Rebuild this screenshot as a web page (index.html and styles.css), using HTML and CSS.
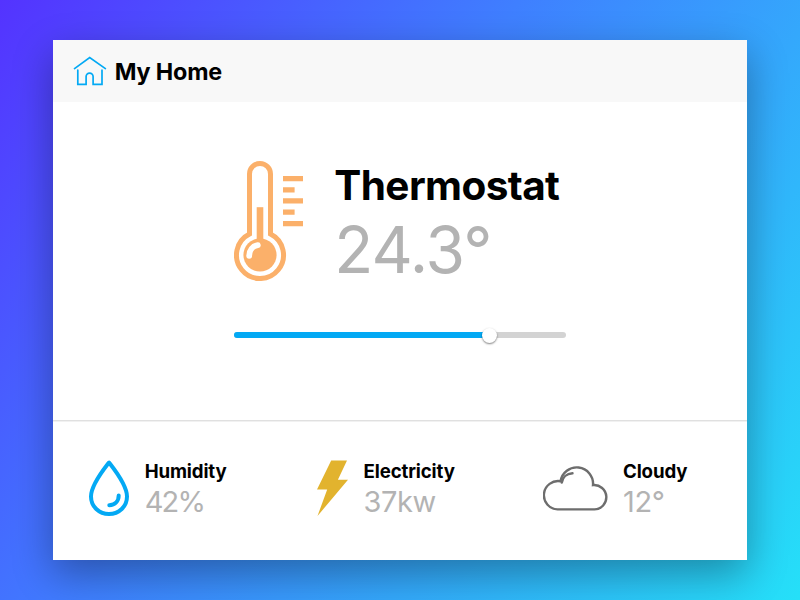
FILE: index.html
```html
<!DOCTYPE html>
<html lang="en">
<head>
<meta charset="utf-8">
<title>My Home</title>
<link rel="stylesheet" href="styles.css">
</head>
<body>
<main class="card">
  <header class="header">
    <svg class="house" width="34" height="30" viewBox="73 56 34 30" fill="none" stroke="#03a9f4" stroke-width="1.7" stroke-linecap="round">
      <path d="M74.5 68.6 89.7 57.6 105.4 68.6"/>
      <path d="M77.8 70.2V84.4H86.1V76.6a3.5 3.5 0 0 1 7 0V84.4H102V70.2"/>
    </svg>
    <h1 class="title">My Home</h1>
  </header>
  <section class="main">
    <div class="thermostat">
      <svg class="thermometer" width="70" height="120" viewBox="0 0 70 120" fill="#fbb06a">
        <path d="M15.5 73V13a10.5 10.5 0 0 1 21 0V73a23.5 23.5 0 1 1-21 0Z" fill="none" stroke="#fbb06a" stroke-width="5"/>
        <path d="M22.7 46.2h6.6V80h-6.6Z"/>
        <circle cx="26" cy="94" r="16.6"/>
        <path d="M15.2 94.8c0-5.5 3.4-9.8 8.6-10.6" fill="none" stroke="#fff" stroke-width="5.8" stroke-linecap="round"/>
        <path d="M49 15h20v5.3H49ZM49 26.2h11.6v5.2H49ZM49 37.2h20v5.3H49ZM49 48.5h11.6v5.2H49ZM49 60h20v5.2H49Z"/>
      </svg>
      <div class="reading">
        <h2 class="reading-name">Thermostat</h2>
        <div class="reading-value">24.3°</div>
      </div>
    </div>
    <div class="slider">
      <div class="slider-fill"></div>
      <div class="slider-thumb"></div>
    </div>
  </section>
  <footer class="footer">
    <div class="stat stat-humidity">
      <svg width="40" height="57" viewBox="89 460 40 57" fill="none" stroke="#03a9f4" stroke-width="4" stroke-linecap="round" stroke-linejoin="round">
        <path d="M109 462.5C104 469 91 485 91 496.5C91 506.5 99 514 109 514S127 506.5 127 496.5C127 485 114 469 109 462.5Z"/>
        <path d="M118.7 495.5C118.7 501 115 505 109.3 505.2"/>
      </svg>
      <div class="stat-text"><h3 class="stat-name">Humidity</h3><div class="stat-value">42%</div></div>
    </div>
    <div class="stat stat-electricity">
      <svg width="31" height="57" viewBox="317.5 460 31 57" fill="#e2b32e">
        <path d="M331.7 460.4H347.5L338.4 479.7H348.5L318 516 327.7 489.4H317.5Z"/>
      </svg>
      <div class="stat-text"><h3 class="stat-name">Electricity</h3><div class="stat-value">37kw</div></div>
    </div>
    <div class="stat stat-cloudy">
      <svg width="65" height="57" viewBox="543 460 65 57" fill="none" stroke="#6d6d6d" stroke-width="2.4" stroke-linecap="round">
        <path d="M557.5 509.4A14.17 14.17 0 1 1 560.6 481.3A16.32 16.32 0 0 1 593 485.1A12.18 12.18 0 1 1 594.5 509.4Z"/>
        <path d="M561.8 482.6C562.5 477.5 566.5 473.5 572.5 473.2"/>
      </svg>
      <div class="stat-text"><h3 class="stat-name">Cloudy</h3><div class="stat-value">12°</div></div>
    </div>
  </footer>
</main>
</body>
</html>
```
FILE: styles.css
```css
* { box-sizing: border-box; }
body {
  margin: 0;
  height: 600px;
  overflow: hidden;
  display: flex;
  align-items: center;
  justify-content: center;
  background: linear-gradient(126deg, #5433ff, #3f7fff 42%, #25e0f8);
  font-family: Inter, sans-serif;
  color: #000;
}
h1, h2, h3 { margin: 0; white-space: nowrap; }
.card {
  width: 693.33px;
  height: 520px;
  background: #fff;
  box-shadow: 0 14px 38px rgba(0, 0, 0, .33);
  display: flex;
  flex-direction: column;
}
.header {
  height: 61.67px;
  padding: 0 0 .33px 20px;
  display: flex;
  align-items: center;
  gap: 6px;
  background: #f8f8f8;
}
.title {
  padding: 2px 0 0 1.33px;
  font-size: 23.33px;
  line-height: 30px;
  font-weight: 700;
  letter-spacing: -.15px;
}
.main {
  height: 319.33px;
  padding: 59.33px 0 0 180.67px;
  border-bottom: 1px solid #e0e0e0;
  box-shadow: 0 1px 0 #f1f1f1;
}
.thermostat { display: flex; gap: 30.33px; }
.reading-name {
  height: 50px;
  line-height: 50px;
  font-size: 40.5px;
  font-weight: 700;
  letter-spacing: -.6px;
}
.reading-value {
  height: 78px;
  line-height: 78px;
  font-size: 64px;
  font-weight: 370;
  letter-spacing: -.9px;
  color: #b3b3b3;
}
.slider {
  position: relative;
  width: 332px;
  height: 6.67px;
  margin-top: 42.67px;
  border-radius: 4px;
  background: #d3d3d3;
}
.slider-fill {
  width: 256px;
  height: 100%;
  border-radius: inherit;
  background: #03a9f4;
}
.slider-thumb {
  position: absolute;
  left: 248px;
  top: -4px;
  width: 15px;
  height: 15px;
  border-radius: 50%;
  background: #fff;
  box-shadow: 0 1px 2px rgba(0, 0, 0, .5);
}
.footer {
  flex: 1;
  display: flex;
  padding: 39px 0 0 35.67px;
}
.stat { display: flex; gap: 15px; }
.stat-humidity { width: 228.5px; gap: 15.67px; }
.stat-electricity { width: 225.5px; }
.stat-name {
  height: 23px;
  line-height: 23px;
  font-size: 18.67px;
  font-weight: 700;
  letter-spacing: -.12px;
}
.stat-value {
  height: 37px;
  line-height: 37px;
  font-size: 29px;
  font-weight: 370;
  letter-spacing: -.4px;
  color: #b3b3b3;
}
.stat-humidity .stat-value { letter-spacing: -1.8px; }
```
